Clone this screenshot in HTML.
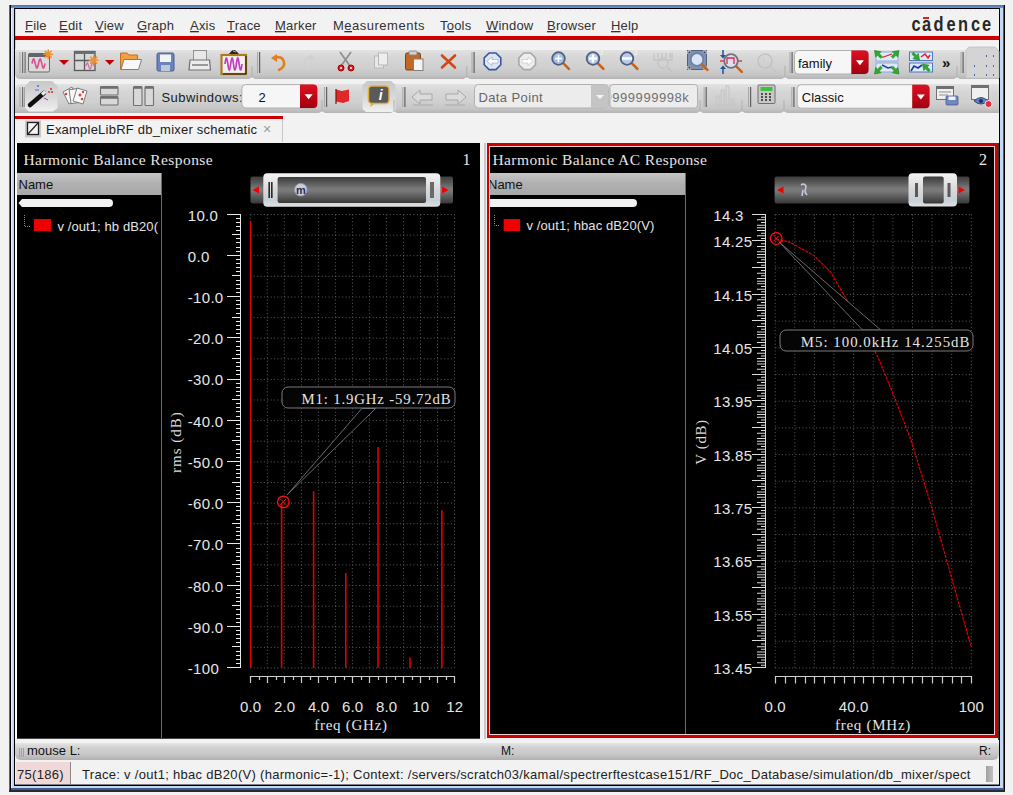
<!DOCTYPE html><html><head><meta charset="utf-8"><style>
html,body{margin:0;padding:0}
body{width:1013px;height:795px;position:relative;overflow:hidden;background:#f2f2f2;font-family:"Liberation Sans",sans-serif}
div{box-sizing:border-box}
</style></head><body>
<div style="position:absolute;left:9px;top:5px;width:1px;height:787px;background:#5a6878"></div>
<div style="position:absolute;left:10px;top:5px;width:1px;height:787px;background:#000"></div>
<div style="position:absolute;left:11px;top:5px;width:994px;height:787px;background:#c4d8f4"></div>
<div style="position:absolute;left:11px;top:5px;width:994px;height:3px;background:linear-gradient(#4a70b0,#7098d0)"></div>
<div style="position:absolute;left:1003px;top:5px;width:1px;height:787px;background:#3a5a98"></div>
<div style="position:absolute;left:1004px;top:5px;width:1px;height:787px;background:#000"></div>
<div style="position:absolute;left:11px;top:788px;width:993px;height:2px;background:#3a5a98"></div>
<div style="position:absolute;left:9px;top:790px;width:996px;height:2px;background:#2a2a2a"></div>
<div style="position:absolute;left:11px;top:8px;width:1px;height:780px;background:#e8f0ff"></div>
<div style="position:absolute;left:14px;top:8px;width:986px;height:778px;background:#000"></div>
<div style="position:absolute;left:15px;top:9px;width:984px;height:776px;background:#f2f2f2"></div>
<div style="position:absolute;left:15px;top:9px;width:1px;height:40px;background:#d0d0d0"></div>
<div style="position:absolute;left:923px;top:17px;width:6px;height:1.5px;background:#dd2020"></div>
<div style="position:absolute;left:15px;top:36px;width:984px;height:4px;background:#cc0000"></div>
<div style="position:absolute;left:15px;top:50px;width:984px;height:29px;background:linear-gradient(#e2e2e2 0%,#d6d6d6 25%,#d0d0d0 60%,#c6c6c6 85%,#b4b4b4 100%);border-radius:0 0 0 5px"></div>
<div style="position:absolute;left:15px;top:84px;width:984px;height:29px;background:linear-gradient(#e2e2e2 0%,#d6d6d6 25%,#d0d0d0 60%,#c6c6c6 85%,#b4b4b4 100%);border-radius:5px 0 0 0"></div>
<div style="position:absolute;left:15px;top:116px;width:268px;height:3px;background:#cc0000"></div>
<div style="position:absolute;left:282px;top:119px;width:1px;height:23px;background:#c8c8c8"></div>
<div style="position:absolute;left:15px;top:143px;width:2px;height:596px;background:#fff"></div>
<div style="position:absolute;left:17px;top:143px;width:463px;height:595px;background:#000"></div>
<div style="position:absolute;left:17px;top:738px;width:463px;height:1px;background:#444"></div>
<div style="position:absolute;left:484px;top:143px;width:2px;height:596px;background:#c8c8c8"></div>
<div style="position:absolute;left:487px;top:143px;width:511px;height:595px;background:#cc0000"></div>
<div style="position:absolute;left:489px;top:146px;width:506px;height:589px;background:#f0d0d0"></div>
<div style="position:absolute;left:490px;top:147px;width:504px;height:587px;background:#000"></div>
<div style="position:absolute;left:998px;top:143px;width:1px;height:597px;background:#333"></div>
<div style="position:absolute;left:15px;top:743px;width:984px;height:17px;background:linear-gradient(#e4e4e4 0%,#d0d0d0 30%,#c8c8c8 65%,#b0b0b0 100%);border-radius:0 0 6px 6px"></div>
<div style="position:absolute;left:19px;top:748px;width:1px;height:9px;background:#a0a0a0"></div>
<div style="position:absolute;left:21px;top:748px;width:1px;height:9px;background:#a0a0a0"></div>
<div style="position:absolute;left:23px;top:748px;width:1px;height:9px;background:#a0a0a0"></div>
<div style="position:absolute;left:15px;top:761px;width:984px;height:24px;background:#f2f2f2"></div>
<div style="position:absolute;left:15px;top:784px;width:984px;height:1px;background:#808080"></div>
<div style="position:absolute;left:16px;top:762px;width:54px;height:22px;background:#f0d8d8"></div>
<div style="position:absolute;left:70px;top:762px;width:1px;height:22px;background:#888"></div>
<div style="position:absolute;left:986px;top:766px;width:7px;height:16px;background:linear-gradient(90deg,#a0a0a0,#c0c0c0)"></div>
<svg style="position:absolute;left:0;top:0" width="1013" height="795" viewBox="0 0 1013 795"><path d="M20 10.5H998" stroke="#e0c8e8" stroke-width="1" stroke-dasharray="1 4"/><text x="25" y="30" font-family='"Liberation Sans", sans-serif' font-size="13" fill="#333" letter-spacing="0.2" text-anchor="start" xml:space="preserve"><tspan text-decoration="underline">F</tspan>ile</text><text x="59" y="30" font-family='"Liberation Sans", sans-serif' font-size="13" fill="#333" letter-spacing="0.2" text-anchor="start" xml:space="preserve"><tspan text-decoration="underline">E</tspan>dit</text><text x="95" y="30" font-family='"Liberation Sans", sans-serif' font-size="13" fill="#333" letter-spacing="0.2" text-anchor="start" xml:space="preserve"><tspan text-decoration="underline">V</tspan>iew</text><text x="137" y="30" font-family='"Liberation Sans", sans-serif' font-size="13" fill="#333" letter-spacing="0.2" text-anchor="start" xml:space="preserve"><tspan text-decoration="underline">G</tspan>raph</text><text x="190" y="30" font-family='"Liberation Sans", sans-serif' font-size="13" fill="#333" letter-spacing="0.2" text-anchor="start" xml:space="preserve"><tspan text-decoration="underline">A</tspan>xis</text><text x="227" y="30" font-family='"Liberation Sans", sans-serif' font-size="13" fill="#333" letter-spacing="0.2" text-anchor="start" xml:space="preserve"><tspan text-decoration="underline">T</tspan>race</text><text x="275" y="30" font-family='"Liberation Sans", sans-serif' font-size="13" fill="#333" letter-spacing="0.2" text-anchor="start" xml:space="preserve"><tspan text-decoration="underline">M</tspan>arker</text><text x="333" y="30" font-family='"Liberation Sans", sans-serif' font-size="13" fill="#333" letter-spacing="0.5" text-anchor="start" xml:space="preserve">M<tspan text-decoration="underline">e</tspan>asurements</text><text x="440" y="30" font-family='"Liberation Sans", sans-serif' font-size="13" fill="#333" letter-spacing="0.2" text-anchor="start" xml:space="preserve">T<tspan text-decoration="underline">o</tspan>ols</text><text x="486" y="30" font-family='"Liberation Sans", sans-serif' font-size="13" fill="#333" letter-spacing="0.2" text-anchor="start" xml:space="preserve"><tspan text-decoration="underline">W</tspan>indow</text><text x="547" y="30" font-family='"Liberation Sans", sans-serif' font-size="13" fill="#333" letter-spacing="0.2" text-anchor="start" xml:space="preserve"><tspan text-decoration="underline">B</tspan>rowser</text><text x="611" y="30" font-family='"Liberation Sans", sans-serif' font-size="13" fill="#333" letter-spacing="0.2" text-anchor="start" xml:space="preserve"><tspan text-decoration="underline">H</tspan>elp</text><text transform="translate(916 31.2) scale(0.78 1)" font-family='"Liberation Sans", sans-serif' font-size="21" font-weight="bold" fill="#282828" text-anchor="middle">c</text><text transform="translate(926.5 31.2) scale(0.78 1)" font-family='"Liberation Sans", sans-serif' font-size="21" font-weight="bold" fill="#282828" text-anchor="middle">a</text><text transform="translate(938.5 31.2) scale(0.78 1)" font-family='"Liberation Sans", sans-serif' font-size="21" font-weight="bold" fill="#282828" text-anchor="middle">d</text><text transform="translate(951 31.2) scale(0.78 1)" font-family='"Liberation Sans", sans-serif' font-size="21" font-weight="bold" fill="#282828" text-anchor="middle">e</text><text transform="translate(963 31.2) scale(0.78 1)" font-family='"Liberation Sans", sans-serif' font-size="21" font-weight="bold" fill="#282828" text-anchor="middle">n</text><text transform="translate(975.5 31.2) scale(0.78 1)" font-family='"Liberation Sans", sans-serif' font-size="21" font-weight="bold" fill="#282828" text-anchor="middle">c</text><text transform="translate(986.5 31.2) scale(0.78 1)" font-family='"Liberation Sans", sans-serif' font-size="21" font-weight="bold" fill="#282828" text-anchor="middle">e</text><text x="46" y="134" font-family='"Liberation Sans", sans-serif' font-size="13" fill="#1a1a1a" letter-spacing="0.22" text-anchor="start" xml:space="preserve">ExampleLibRF db_mixer schematic</text><text x="263" y="134" font-family='"Liberation Sans", sans-serif' font-size="14" fill="#999" letter-spacing="0" text-anchor="start" xml:space="preserve">×</text><text x="27" y="755" font-family='"Liberation Sans", sans-serif' font-size="13" fill="#111" letter-spacing="0" text-anchor="start" xml:space="preserve">mouse L:</text><text x="501" y="755" font-family='"Liberation Sans", sans-serif' font-size="12" fill="#111" letter-spacing="0" text-anchor="start" xml:space="preserve">M:</text><text x="979" y="755" font-family='"Liberation Sans", sans-serif' font-size="12" fill="#111" letter-spacing="0" text-anchor="start" xml:space="preserve">R:</text><text x="17" y="779" font-family='"Liberation Sans", sans-serif' font-size="13" fill="#222" letter-spacing="0.3" text-anchor="start" xml:space="preserve">75(186)</text><text x="82" y="779" font-family='"Liberation Sans", sans-serif' font-size="13" fill="#222" letter-spacing="0.3" text-anchor="start" xml:space="preserve">Trace: v /out1; hbac dB20(V) (harmonic=-1); Context: /servers/scratch03/kamal/spectrerftestcase151/RF_Doc_Database/simulation/db_mixer/spect</text><defs><linearGradient id="redbtn" x1="0" y1="0" x2="0" y2="1"><stop offset="0" stop-color="#e01020"/><stop offset="1" stop-color="#a00010"/></linearGradient>
<linearGradient id="pressed" x1="0" y1="0" x2="0" y2="1"><stop offset="0" stop-color="#c8c8c8"/><stop offset="0.6" stop-color="#dcdcdc"/><stop offset="1" stop-color="#f0f0f0"/></linearGradient></defs><rect x="19.5" y="52" width="1" height="21" fill="#a8a8a8"/><rect x="22.0" y="52" width="1.2" height="21" fill="#707070"/><rect x="24.5" y="52" width="1.2" height="21" fill="#707070"/><rect x="28.5" y="53.5" width="21" height="18.5" rx="1.5" fill="#dadada" stroke="#6a6a6a" stroke-width="1"/><rect x="28.5" y="53.5" width="21" height="3.5" fill="#5e6670"/><path d="M32.0 63.5 L32.3 62.1 L32.6 60.9 L33.0 59.9 L33.3 59.2 L33.6 59.0 L34.0 59.2 L34.3 59.9 L34.6 60.9 L34.9 62.1 L35.2 63.5 L35.6 64.9 L35.9 66.1 L36.2 67.1 L36.5 67.8 L36.9 68.0 L37.2 67.8 L37.5 67.1 L37.9 66.1 L38.2 64.9 L38.5 63.5 L38.8 62.1 L39.1 60.9 L39.5 59.9 L39.8 59.2 L40.1 59.0 L40.5 59.2 L40.8 59.9 L41.1 60.9 L41.4 62.1 L41.8 63.5 L42.1 64.9 L42.4 66.1 L42.7 67.1 L43.0 67.8 L43.4 68.0 L43.7 67.8 L44.0 67.1 L44.4 66.1 L44.7 64.9 L45.0 63.5" stroke="#d85090" stroke-width="1.6" fill="none"/><path d="M44.0 54.2L52.4 54.2M45.2 51.2L51.2 57.2M48.2 50.0L48.2 58.4M51.2 51.2L45.2 57.2" stroke="#f09030" stroke-width="1.6" stroke-linecap="round"/><path d="M59 60H69L64.0 65Z" fill="#c00000"/><rect x="74.5" y="51.5" width="20.5" height="19" fill="#d8d8d8" stroke="#5a5a5a" stroke-width="1.3"/><path d="M84.5 51.5V70.5M74.5 60.5H95" stroke="#5a5a5a" stroke-width="1.3"/><rect x="74.5" y="51.5" width="20.5" height="2.5" fill="#6a7078"/><path d="M86.0 66.0 L86.2 65.3 L86.4 64.6 L86.6 64.1 L86.8 63.6 L87.0 63.2 L87.2 63.0 L87.4 63.0 L87.6 63.1 L87.8 63.4 L88.0 63.9 L88.2 64.4 L88.4 65.1 L88.6 65.8 L88.8 66.5 L89.0 67.1 L89.2 67.8 L89.4 68.3 L89.6 68.7 L89.8 68.9 L90.0 69.0 L90.2 68.9 L90.4 68.7 L90.6 68.3 L90.8 67.8 L91.0 67.1 L91.2 66.5 L91.4 65.8 L91.6 65.1 L91.8 64.4 L92.0 63.9 L92.2 63.4 L92.4 63.1 L92.6 63.0 L92.8 63.0 L93.0 63.2 L93.2 63.6 L93.4 64.1 L93.6 64.6 L93.8 65.3 L94.0 66.0" stroke="#d070a0" stroke-width="1.3" fill="none"/><path d="M89.5 60.2L97.9 60.2M90.7 57.2L96.7 63.2M93.7 56.0L93.7 64.4M96.7 57.2L90.7 63.2" stroke="#f09030" stroke-width="1.6" stroke-linecap="round"/><path d="M105 60H114.5L109.75 65Z" fill="#c00000"/><path d="M120.5 53H127L129 55H137.5V69.5H120.5Z" fill="#f0a040" stroke="#c07020" stroke-width="1"/><path d="M124 59.5H141.5L138.5 69.5H121Z" fill="#f8f8f8" stroke="#808080" stroke-width="1"/><rect x="157" y="53" width="17" height="18" rx="1.5" fill="#6a84c0" stroke="#4a5c90" stroke-width="1"/><rect x="160" y="54.5" width="11" height="7.5" fill="#f4f4f4"/><rect x="161" y="65" width="9" height="6" fill="#c0c8d8"/><rect x="193.5" y="50.5" width="13" height="10" fill="#e8e8e8" stroke="#909090" stroke-width="1"/><path d="M190 60H209.5L210.5 70H189Z" fill="#ececec" stroke="#707070" stroke-width="1.2"/><rect x="192" y="64" width="16" height="2" fill="#9a9a9a"/><path d="M228 55L232 50.5L235 50L239 54L240 55Z" fill="#202020"/><path d="M233 51L236 52" stroke="#d0d0d0" stroke-width="0.8"/><rect x="221.5" y="55" width="24.5" height="19" fill="#f4f0f0" stroke="#b07820" stroke-width="2.2"/><path d="M246 56V74H223" stroke="#201000" stroke-width="1" fill="none"/><path d="M225.0 64.0 L225.4 61.3 L225.8 59.1 L226.3 58.1 L226.7 58.3 L227.1 59.8 L227.6 62.1 L228.0 64.9 L228.4 67.5 L228.8 69.3 L229.2 70.0 L229.7 69.3 L230.1 67.5 L230.5 64.9 L230.9 62.1 L231.4 59.8 L231.8 58.3 L232.2 58.1 L232.7 59.1 L233.1 61.3 L233.5 64.0 L233.9 66.7 L234.3 68.9 L234.8 69.9 L235.2 69.7 L235.6 68.2 L236.1 65.9 L236.5 63.1 L236.9 60.5 L237.3 58.7 L237.8 58.0 L238.2 58.7 L238.6 60.5 L239.0 63.1 L239.4 65.9 L239.9 68.2 L240.3 69.7 L240.7 69.9 L241.2 68.9 L241.6 66.7 L242.0 64.0" stroke="#c040c0" stroke-width="1.7" fill="none"/><path d="M249 79Q252 76 255 79Z" fill="#f2f2f2"/><rect x="251.5" y="66" width="1" height="11" fill="#b0b0b0"/><rect x="257" y="52" width="1" height="21" fill="#a8a8a8"/><rect x="259" y="52" width="1.2" height="21" fill="#606060"/><path d="M274 58Q282 55 284 62Q285 67 279 70" stroke="#e08020" stroke-width="2.6" fill="none" stroke-linecap="round"/><path d="M271 58L277 54L277 62Z" fill="#e08020"/><path d="M313 58Q306 56 305 62Q305 67 309 70" stroke="#d0d0d0" stroke-width="2.4" fill="none" stroke-linecap="round"/><path d="M315 58L310 54L310 62Z" fill="#d0d0d0"/><path d="M340 52L350 66M351 52L341 66" stroke="#909090" stroke-width="1.8"/><circle cx="341" cy="68" r="3" fill="#e02020" stroke="#a00000" stroke-width="1"/><circle cx="351" cy="68" r="3" fill="#e02020" stroke="#a00000" stroke-width="1"/><circle cx="341" cy="68" r="1" fill="#fff"/><circle cx="351" cy="68" r="1" fill="#fff"/><rect x="374.5" y="56" width="9" height="12" fill="#e8e8e8" stroke="#b8b8b8"/><rect x="378.5" y="53" width="9" height="12" fill="#eeeeee" stroke="#b8b8b8"/><rect x="405.5" y="53" width="15" height="17" rx="1.5" fill="#c06828" stroke="#804010" stroke-width="1"/><rect x="409" y="51" width="8" height="4" rx="1" fill="#d0d0d0" stroke="#808080" stroke-width="0.8"/><rect x="413.5" y="59" width="9.5" height="11.5" fill="#f4f4f4" stroke="#808080" stroke-width="1"/><path d="M442 55.5L455 67.5M455 55.5L442 67.5" stroke="#d04818" stroke-width="2.6" stroke-linecap="round"/><path d="M463.7 79Q466.7 76 469.7 79Z" fill="#f2f2f2"/><rect x="466.2" y="66" width="1" height="11" fill="#b0b0b0"/><rect x="471.5" y="52" width="1" height="21" fill="#a8a8a8"/><rect x="473.5" y="52" width="1.2" height="21" fill="#606060"/><path d="M500.8 64.7 L495.9 69.6 L489.1 69.6 L484.2 64.7 L484.2 57.9 L489.1 53.0 L495.9 53.0 L500.8 57.9Z" fill="#dde4f4" stroke="#3a58a0" stroke-width="1.6"/><path d="M487 61.3L492 57V59.5H498V63H492V65.5Z" fill="#fff" stroke="#90a0c0" stroke-width="0.6"/><path d="M535.5 64.7 L530.6 69.6 L523.8 69.6 L518.9 64.7 L518.9 57.9 L523.8 53.0 L530.6 53.0 L535.5 57.9Z" fill="#eeeeee" stroke="#a8a8a8" stroke-width="1.6"/><path d="M533 61.3L528 57V59.5H522V63H528V65.5Z" fill="#fff" stroke="#c0c0c0" stroke-width="0.6"/><path d="M562.9 62.9L568.9 68.9" stroke="#d06010" stroke-width="2.6" stroke-linecap="round"/><circle cx="558.5" cy="58.5" r="6.3" fill="#a8c0e8" stroke="#506080" stroke-width="1.8"/><path d="M555 58.5H562M558.5 55V62" stroke="#fff" stroke-width="1.5"/><path d="M597.4 62.9L603.4 68.9" stroke="#d06010" stroke-width="2.6" stroke-linecap="round"/><circle cx="593" cy="58.5" r="6.3" fill="#b8cce8" stroke="#506080" stroke-width="1.8"/><path d="M589 58.5H597M593 54.5V62.5" stroke="#fff" stroke-width="2.4"/><text x="600.0" y="55.0" font-family='"Liberation Sans", sans-serif' font-size="6" fill="#f8f8f8" letter-spacing="0" text-anchor="start" >2</text><path d="M631.4 62.9L637.4 68.9" stroke="#d06010" stroke-width="2.6" stroke-linecap="round"/><circle cx="627" cy="58.5" r="6.3" fill="#b8cce8" stroke="#506080" stroke-width="1.8"/><path d="M622 58.5H632" stroke="#fff" stroke-width="2.4"/><text x="634.0" y="55.0" font-family='"Liberation Sans", sans-serif' font-size="6" fill="#f8f8f8" letter-spacing="0" text-anchor="start" >2</text><path d="M654 53V60H672V53M658 53V58M662 53V58M666 53V58M670 53V58" stroke="#c4c4c4" stroke-width="1.4" fill="none"/><circle cx="663" cy="63" r="5" fill="none" stroke="#c4c4c4" stroke-width="1.4"/><path d="M667 67L673 73" stroke="#c4c4c4" stroke-width="1.8"/><rect x="687.5" y="50.5" width="19" height="19" fill="#8090b0" stroke="#506080" stroke-width="1"/><path d="M688 54V51H691M703 51H706V54M706 66V69H703M691 69H688V66" stroke="#f0f0f0" stroke-width="1"/><path d="M701.4 63.9L707.4 69.9" stroke="#d06010" stroke-width="2.6" stroke-linecap="round"/><circle cx="697" cy="59.5" r="6.3" fill="#d8e4f8" stroke="#7080a0" stroke-width="1.8"/><path d="M723 50V57M723 74V67" stroke="#2050a0" stroke-width="1.5"/><path d="M720 55L723 58.5L726 55ZM720 69L723 65.5L726 69Z" fill="#2050a0"/><path d="M720 61H724M737 61H742" stroke="#e04040" stroke-width="1.3"/><path d="M735.8 65.8L741.8 71.8" stroke="#d06010" stroke-width="2.6" stroke-linecap="round"/><circle cx="731" cy="61" r="6.8" fill="#e0e0e8" stroke="#707080" stroke-width="1.8"/><path d="M727 64V58H734V64" stroke="#e02060" stroke-width="1.3" fill="none"/><circle cx="765" cy="61" r="7" fill="none" stroke="#c0c0c0" stroke-width="1.3"/><path d="M760 58L770 64M764 54V68" stroke="#d0d0d0" stroke-width="1"/><path d="M770 66L777 73" stroke="#c8c8c8" stroke-width="1.8"/><path d="M782 79Q785 76 788 79Z" fill="#f2f2f2"/><rect x="784.5" y="66" width="1" height="11" fill="#b0b0b0"/><rect x="789.5" y="52" width="1" height="21" fill="#a8a8a8"/><rect x="791.5" y="52" width="1.2" height="21" fill="#606060"/><rect x="794.5" y="50.5" width="74.0" height="23.5" rx="4" fill="#f6f6f6" stroke="#b0b0b0" stroke-width="1"/><path d="M851.3 50.5H864.5Q868.5 50.5 868.5 54.5V70Q868.5 74 864.5 74H851.3Z" fill="url(#redbtn)"/><path d="M855.9 60.25H863.9L859.9 65.25Z" fill="#fff"/><text x="798.0" y="68.0" font-family='"Liberation Sans", sans-serif' font-size="13" fill="#111" letter-spacing="0" text-anchor="start" >family</text><rect x="876" y="52" width="22" height="9" fill="#dfe8f8" stroke="#90a8d8" stroke-width="1"/><rect x="876" y="63" width="22" height="9" fill="#dfe8f8" stroke="#90a8d8" stroke-width="1"/><path d="M882 57.5L892 54" stroke="#e02020" stroke-width="1.3"/><path d="M882 65L888 68L892 67" stroke="#2040a0" stroke-width="1.5" fill="none"/><path d="M874.5 50.5L881.1 51.7L875.7 57.1Z" fill="#30a830" stroke="#208020" stroke-width="0.6"/><path d="M878.4 54.4L881.6 57.6" stroke="#30a830" stroke-width="3"/><path d="M899.0 50.5L897.8 57.1L892.4 51.7Z" fill="#30a830" stroke="#208020" stroke-width="0.6"/><path d="M895.1 54.4L891.9 57.6" stroke="#30a830" stroke-width="3"/><path d="M874.5 74.0L875.7 67.4L881.1 72.8Z" fill="#30a830" stroke="#208020" stroke-width="0.6"/><path d="M878.4 70.1L881.6 66.9" stroke="#30a830" stroke-width="3"/><path d="M899.0 74.0L892.4 72.8L897.8 67.4Z" fill="#30a830" stroke="#208020" stroke-width="0.6"/><path d="M895.1 70.1L891.9 66.9" stroke="#30a830" stroke-width="3"/><rect x="909.5" y="52" width="23" height="8.5" fill="#dfe8f8" stroke="#5078c0" stroke-width="1"/><rect x="909.5" y="63" width="23" height="9" fill="#dfe8f8" stroke="#5078c0" stroke-width="1"/><path d="M921 57L925 54L928 58L930 55" stroke="#e02020" stroke-width="1.5" fill="none"/><path d="M911 71L914 66L918 68L922 65" stroke="#1838a0" stroke-width="1.6" fill="none"/><path d="M919.5 60.0L912.9 58.8L918.3 53.4Z" fill="#30a830" stroke="#208020" stroke-width="0.6"/><path d="M915.6 56.1L912.4 52.9" stroke="#30a830" stroke-width="3"/><path d="M922.5 64.0L929.1 65.2L923.7 70.6Z" fill="#30a830" stroke="#208020" stroke-width="0.6"/><path d="M926.4 67.9L929.6 71.1" stroke="#30a830" stroke-width="3"/><text x="942.0" y="68.0" font-family='"Liberation Sans", sans-serif' font-size="15" fill="#111" letter-spacing="0" text-anchor="start" font-weight="bold">»</text><path d="M954 79Q957 76 960 79Z" fill="#f2f2f2"/><rect x="956.5" y="66" width="1" height="11" fill="#b0b0b0"/><rect x="960.5" y="52" width="1" height="21" fill="#a8a8a8"/><rect x="962.5" y="52" width="1.2" height="21" fill="#606060"/><path d="M969 47H995L999 51V78H966V50Z" fill="#d4d4d4" stroke="#c0c0c0" stroke-width="0.8"/><path d="M986 56h1M993 56h1M974 66h1M986 66h1M993 66h1M974 75h1M986 75h1M993 75h1" stroke="#2040a0" stroke-width="1.5"/><rect x="19.5" y="87" width="1" height="20" fill="#a8a8a8"/><rect x="22.0" y="87" width="1.2" height="20" fill="#707070"/><rect x="24.5" y="87" width="1.2" height="20" fill="#707070"/><path d="M30 81H52L57.5 86V108L53 111.5H29L25 108V86Z" fill="url(#pressed)"/><path d="M30 105L44 93" stroke="#101010" stroke-width="4.5" stroke-linecap="round"/><path d="M42 94.5L45.5 91.5" stroke="#e8e8e8" stroke-width="3.5"/><circle cx="38" cy="86" r="0.9" fill="#4060e0"/><path d="M35 90H39" stroke="#4060e0" stroke-width="0.9"/><circle cx="51" cy="89" r="1" fill="#e02020"/><circle cx="49" cy="92" r="1" fill="#e04020"/><circle cx="52" cy="92" r="1" fill="#e02020"/><path d="M44 98L48 100" stroke="#a040c0" stroke-width="1"/><path d="M63 92L72 87L78 100L69 104Z" fill="#f8f8f8" stroke="#707070" stroke-width="0.9"/><path d="M70 89H80V103H70Z" fill="#f8f8f8" stroke="#707070" stroke-width="0.9" transform="rotate(-8 75 96)"/><path d="M77 88L87 91L83 104L73 101Z" fill="#f8f8f8" stroke="#707070" stroke-width="0.9"/><circle cx="66" cy="94" r="1.3" fill="#e04040"/><circle cx="80" cy="95" r="1.5" fill="#e04040"/><circle cx="82" cy="99" r="1.3" fill="#e04040"/><circle cx="83" cy="92" r="1.2" fill="#e04040"/><rect x="100.5" y="86.5" width="17.5" height="8.5" rx="1" fill="#d8d8d8" stroke="#707070" stroke-width="1.1"/><rect x="100.5" y="86.5" width="17.5" height="2.3" fill="#707070"/><rect x="100.5" y="96.5" width="17.5" height="8.5" rx="1" fill="#d8d8d8" stroke="#707070" stroke-width="1.1"/><rect x="100.5" y="96.5" width="17.5" height="2.3" fill="#707070"/><rect x="133.5" y="86.5" width="8.5" height="19" rx="1" fill="#d8d8d8" stroke="#707070" stroke-width="1.1"/><rect x="133.5" y="86.5" width="8.5" height="2.3" fill="#707070"/><rect x="145" y="86.5" width="8.5" height="19" rx="1" fill="#d8d8d8" stroke="#707070" stroke-width="1.1"/><rect x="145" y="86.5" width="8.5" height="2.3" fill="#707070"/><text x="161.5" y="102.0" font-family='"Liberation Sans", sans-serif' font-size="13" fill="#1a1a1a" letter-spacing="0.45" text-anchor="start" >Subwindows:</text><rect x="241.8" y="84.6" width="75.5" height="23.400000000000006" rx="4" fill="#f6f6f6" stroke="#b0b0b0" stroke-width="1"/><path d="M300 84.6H313.3Q317.3 84.6 317.3 88.6V104Q317.3 108 313.3 108H300Z" fill="url(#redbtn)"/><path d="M304.65 94.3H312.65L308.65 99.3Z" fill="#fff"/><text x="258.5" y="102.0" font-family='"Liberation Sans", sans-serif' font-size="13" fill="#111" letter-spacing="0" text-anchor="start" >2</text><path d="M319 113Q322 110 325 113Z" fill="#f2f2f2"/><rect x="321.5" y="100" width="1" height="11" fill="#b0b0b0"/><rect x="324" y="87" width="1" height="20" fill="#a8a8a8"/><rect x="326" y="87" width="1.2" height="20" fill="#606060"/><path d="M336 89.5L342 91L349 89.5V101L343 103L336 101.5Z" fill="#e02828"/><path d="M336 89V104" stroke="#801010" stroke-width="1.2"/><path d="M367 81H391L395.5 85V110L392 112H366L362.5 109V85Z" fill="url(#pressed)"/><rect x="368.5" y="86" width="20.5" height="17.5" rx="3.5" fill="#5a5a5a" stroke="#e0b040" stroke-width="1.5"/><path d="M371 103L370 107L375 103.5" fill="#e0b040"/><text x="378.8" y="100.0" font-family='"Liberation Sans", sans-serif' font-size="14" fill="#fff" letter-spacing="0" text-anchor="start" font-weight="bold" font-style="italic">i</text><path d="M391 113Q394 110 397 113Z" fill="#f2f2f2"/><rect x="393.5" y="100" width="1" height="11" fill="#b0b0b0"/><rect x="402.3" y="87" width="1" height="20" fill="#a8a8a8"/><rect x="404.3" y="87" width="1.2" height="20" fill="#606060"/><path d="M412 97L420 90V94H432V100H420V104Z" fill="#dcdcdc" stroke="#a8a8a8" stroke-width="1"/><path d="M413 105H433" stroke="#b0b0b0" stroke-width="1.2"/><path d="M466 97L458 90V94H446V100H458V104Z" fill="#dcdcdc" stroke="#a8a8a8" stroke-width="1"/><path d="M445 105H465" stroke="#b0b0b0" stroke-width="1.2"/><rect x="474.5" y="84.5" width="134" height="23.5" rx="4" fill="#ececec" stroke="#b0b0b0" stroke-width="1"/><path d="M591 84.5H604.5Q608.5 84.5 608.5 88.5V104Q608.5 108 604.5 108H591Z" fill="#c4c4c4"/><path d="M596 95H604L600 99Z" fill="#f4f4f4"/><text x="478.4" y="102.0" font-family='"Liberation Sans", sans-serif' font-size="13" fill="#666" letter-spacing="0.4" text-anchor="start" >Data Point</text><rect x="610" y="84.5" width="87.5" height="23.5" rx="3" fill="#ececec" stroke="#b0b0b0" stroke-width="1"/><svg x="611" y="84" width="86" height="24" overflow="hidden"><text x="-6.5" y="18.0" font-family='"Liberation Sans", sans-serif' font-size="13" fill="#707070" letter-spacing="0.55" text-anchor="start" >9999999998k</text></svg><path d="M697 113Q700 110 703 113Z" fill="#f2f2f2"/><rect x="699.5" y="100" width="1" height="11" fill="#b0b0b0"/><rect x="703.6" y="87" width="1" height="20" fill="#a8a8a8"/><rect x="705.6" y="87" width="1.2" height="20" fill="#606060"/><path d="M714 105H736M716 105V96H719V105M721 105V90H724V105M726 105V86H729V105M731 105V99H734V105" stroke="#c4c4c4" stroke-width="1" fill="none"/><path d="M739 113Q742 110 745 113Z" fill="#f2f2f2"/><rect x="741.5" y="100" width="1" height="11" fill="#b0b0b0"/><rect x="748" y="87" width="1" height="20" fill="#a8a8a8"/><rect x="750" y="87" width="1.2" height="20" fill="#606060"/><rect x="758" y="85" width="17" height="18.5" rx="1" fill="#c8c8c8" stroke="#707070" stroke-width="1"/><rect x="760.5" y="87" width="12" height="4" fill="#40c040"/><path d="M761 94h2M765 94h2M769 94h2M761 97h2M765 97h2M769 97h2M761 100h2M765 100h2M769 100h2" stroke="#505050" stroke-width="1.8"/><path d="M781 113Q784 110 787 113Z" fill="#f2f2f2"/><rect x="783.5" y="100" width="1" height="11" fill="#b0b0b0"/><rect x="791.3" y="87" width="1" height="20" fill="#a8a8a8"/><rect x="793.3" y="87" width="1.2" height="20" fill="#606060"/><rect x="797.2" y="84.7" width="132.29999999999995" height="23.5" rx="4" fill="#f6f6f6" stroke="#b0b0b0" stroke-width="1"/><path d="M912.2 84.7H925.5Q929.5 84.7 929.5 88.7V104.2Q929.5 108.2 925.5 108.2H912.2Z" fill="url(#redbtn)"/><path d="M916.85 94.45H924.85L920.85 99.45Z" fill="#fff"/><text x="801.8" y="102.0" font-family='"Liberation Sans", sans-serif' font-size="13" fill="#111" letter-spacing="0" text-anchor="start" >Classic</text><rect x="936.5" y="86.5" width="17" height="13" fill="#f0f0f0" stroke="#707070" stroke-width="1"/><rect x="936.5" y="86.5" width="17" height="2.5" fill="#707070"/><path d="M939 92H951M939 95H948" stroke="#909090" stroke-width="1"/><rect x="946" y="96" width="12" height="9" rx="1" fill="#7088c0" stroke="#4a5c90" stroke-width="0.8"/><rect x="948.5" y="96.5" width="7" height="3.5" fill="#f0f0f0"/><rect x="971.5" y="85.5" width="17" height="14" fill="#f0f0f0" stroke="#707070" stroke-width="1"/><rect x="971.5" y="85.5" width="17" height="2.5" fill="#707070"/><path d="M974 101Q981 94 988 101Q981 107 974 101Z" fill="#6080c0" stroke="#304880" stroke-width="1"/><circle cx="981" cy="101" r="2" fill="#203060"/><circle cx="988.5" cy="104" r="3.5" fill="#e03040" stroke="#fff" stroke-width="0.8"/><rect x="25" y="120.5" width="16" height="17" fill="#c8c8c8"/><rect x="27.5" y="122.5" width="11" height="12" fill="#f4f4f4" stroke="#202020" stroke-width="1.3"/><path d="M28 134L38 123" stroke="#202020" stroke-width="1.2"/><defs>
<linearGradient id="chan" x1="0" y1="0" x2="0" y2="1">
<stop offset="0" stop-color="#3c3c3c"/><stop offset="0.2" stop-color="#555"/><stop offset="0.45" stop-color="#7a7a7a"/><stop offset="0.55" stop-color="#787878"/><stop offset="0.8" stop-color="#555"/><stop offset="1" stop-color="#383838"/></linearGradient>
<linearGradient id="silver" x1="0" y1="0" x2="0" y2="1">
<stop offset="0" stop-color="#f4f4f4"/><stop offset="0.5" stop-color="#d8d8d8"/><stop offset="0.8" stop-color="#c8d0d8"/><stop offset="1" stop-color="#e0e0e0"/></linearGradient>
<linearGradient id="namebar" x1="0" y1="0" x2="0" y2="1">
<stop offset="0" stop-color="#c4c4c4"/><stop offset="0.5" stop-color="#b0b0b0"/><stop offset="1" stop-color="#a8a8a8"/></linearGradient>
</defs><text x="23.5" y="165.0" font-family='"Liberation Serif", serif' font-size="15.5" fill="#e4e4e4" letter-spacing="0.42" text-anchor="start" >Harmonic Balance Response</text><text x="462.5" y="165.0" font-family='"Liberation Serif", serif' font-size="16" fill="#e4e4e4" letter-spacing="0" text-anchor="start" >1</text><rect x="17" y="173" width="144" height="22" fill="url(#namebar)"/><text x="18.5" y="188.6" font-family='"Liberation Sans", sans-serif' font-size="13" fill="#111" letter-spacing="0" text-anchor="start" >Name</text><rect x="161" y="173" width="1" height="565" fill="#6a6a6a"/><path d="M22 199H109Q113 199 113 203Q113 207 109 207H22L18.5 203Z" fill="#f2f2f2"/><path d="M24.5 215V226.5H31" stroke="#888" stroke-width="1" stroke-dasharray="1 1" fill="none"/><rect x="34" y="219" width="17" height="12" fill="#ee0000"/><svg x="0" y="210" width="158" height="30" overflow="hidden"><text x="57.4" y="20.8" font-family='"Liberation Sans", sans-serif' font-size="13" fill="#e4e4e4" letter-spacing="0.1" text-anchor="start" >v /out1; hb dB20(V)</text></svg><rect x="250.5" y="176.5" width="14" height="27" rx="2" fill="url(#chan)"/><rect x="439" y="176.5" width="14" height="27" rx="2" fill="url(#chan)"/><rect x="263.3" y="173.3" width="177" height="33.4" rx="4" fill="url(#silver)"/><rect x="277.6" y="177" width="148.4" height="26" rx="2" fill="url(#chan)"/><path d="M252.5 190L259 186.5V193.5Z" fill="#f00000"/><path d="M448.5 190L442 186.5V193.5Z" fill="#f00000"/><rect x="268.5" y="182" width="1.3" height="16" fill="#000"/><rect x="271.2" y="182" width="1.3" height="16" fill="#000"/><rect x="430" y="182" width="4" height="16" fill="#6a6a6a"/><circle cx="300.8" cy="189.7" r="6.3" fill="#c8cce0" stroke="#9098b8" stroke-width="1"/><text x="300.8" y="193.5" font-family='"Liberation Sans", sans-serif' font-size="11" font-weight="bold" fill="#303040" text-anchor="middle">m</text><text x="492.5" y="164.5" font-family='"Liberation Serif", serif' font-size="15.5" fill="#e4e4e4" letter-spacing="0.4" text-anchor="start" >Harmonic Balance AC Response</text><text x="979.0" y="164.7" font-family='"Liberation Serif", serif' font-size="16" fill="#ececec" letter-spacing="0" text-anchor="start" >2</text><rect x="490" y="173" width="196" height="22" fill="url(#namebar)"/><svg x="490" y="173" width="196" height="22" overflow="hidden"><text x="-2.0" y="15.6" font-family='"Liberation Sans", sans-serif' font-size="13" fill="#111" letter-spacing="0" text-anchor="start" >Name</text></svg><rect x="685" y="173" width="1" height="561" fill="#6a6a6a"/><path d="M490 199H633Q637 199 637 203Q637 207 633 207H490Z" fill="#f2f2f2"/><path d="M494.5 215V225.5H500" stroke="#888" stroke-width="1" stroke-dasharray="1 1" fill="none"/><rect x="503.6" y="219" width="16.5" height="12" fill="#ee0000"/><text x="526.5" y="230.3" font-family='"Liberation Sans", sans-serif' font-size="13" fill="#e4e4e4" letter-spacing="0.1" text-anchor="start" >v /out1; hbac dB20(V)</text><rect x="774.6" y="176.4" width="194.8" height="27" rx="2" fill="url(#chan)"/><rect x="908.5" y="173.3" width="48.5" height="33.2" rx="4" fill="url(#silver)"/><rect x="923" y="176.4" width="20.7" height="27" rx="2" fill="url(#chan)"/><rect x="915" y="183" width="3" height="14" fill="#5a5a5a"/><rect x="947.5" y="183" width="3" height="14" fill="#5a5a5a"/><path d="M777 190L783.5 186.5V193.5Z" fill="#f00000"/><path d="M965 190L958.5 186.5V193.5Z" fill="#f00000"/><path d="M801 185Q804 183 806 186L805 192L807 195M803 190L802 196" stroke="#c0c8e0" stroke-width="1.6" fill="none"/><path d="M250.3 214.5H454.5 M250.3 235.1H454.5 M250.3 255.7H454.5 M250.3 276.3H454.5 M250.3 297.0H454.5 M250.3 317.6H454.5 M250.3 338.2H454.5 M250.3 358.8H454.5 M250.3 379.4H454.5 M250.3 400.0H454.5 M250.3 420.6H454.5 M250.3 441.2H454.5 M250.3 461.9H454.5 M250.3 482.5H454.5 M250.3 503.1H454.5 M250.3 523.7H454.5 M250.3 544.3H454.5 M250.3 564.9H454.5 M250.3 585.5H454.5 M250.3 606.2H454.5 M250.3 626.8H454.5 M250.3 647.4H454.5 M250.3 668.0H454.5 M250.3 214.5V668.0 M267.3 214.5V668.0 M284.3 214.5V668.0 M301.4 214.5V668.0 M318.4 214.5V668.0 M335.4 214.5V668.0 M352.4 214.5V668.0 M369.4 214.5V668.0 M386.4 214.5V668.0 M403.5 214.5V668.0 M420.5 214.5V668.0 M437.5 214.5V668.0 M454.5 214.5V668.0" stroke="#5c5c5c" stroke-width="1" stroke-dasharray="1 2.4" fill="none"/><path d="M240.5 214.5V668.0 M227 214.5H241 M236 218.5H241 M236 222.5H241 M236 226.5H241 M236 230.5H241 M232 234.5H241 M236 238.5H241 M236 242.5H241 M236 247.5H241 M236 251.5H241 M227 255.5H241 M236 259.5H241 M236 263.5H241 M236 267.5H241 M236 271.5H241 M232 275.5H241 M236 280.5H241 M236 284.5H241 M236 288.5H241 M236 292.5H241 M227 296.5H241 M236 300.5H241 M236 304.5H241 M236 308.5H241 M236 313.5H241 M232 317.5H241 M236 321.5H241 M236 325.5H241 M236 329.5H241 M236 333.5H241 M227 337.5H241 M236 341.5H241 M236 346.5H241 M236 350.5H241 M236 354.5H241 M232 358.5H241 M236 362.5H241 M236 366.5H241 M236 370.5H241 M236 374.5H241 M227 379.5H241 M236 383.5H241 M236 387.5H241 M236 391.5H241 M236 395.5H241 M232 399.5H241 M236 403.5H241 M236 407.5H241 M236 411.5H241 M236 416.5H241 M227 420.5H241 M236 424.5H241 M236 428.5H241 M236 432.5H241 M236 436.5H241 M232 440.5H241 M236 444.5H241 M236 449.5H241 M236 453.5H241 M236 457.5H241 M227 461.5H241 M236 465.5H241 M236 469.5H241 M236 473.5H241 M236 477.5H241 M232 482.5H241 M236 486.5H241 M236 490.5H241 M236 494.5H241 M236 498.5H241 M227 502.5H241 M236 506.5H241 M236 510.5H241 M236 515.5H241 M236 519.5H241 M232 523.5H241 M236 527.5H241 M236 531.5H241 M236 535.5H241 M236 539.5H241 M227 543.5H241 M236 548.5H241 M236 552.5H241 M236 556.5H241 M236 560.5H241 M232 564.5H241 M236 568.5H241 M236 572.5H241 M236 576.5H241 M236 581.5H241 M227 585.5H241 M236 589.5H241 M236 593.5H241 M236 597.5H241 M236 601.5H241 M232 605.5H241 M236 609.5H241 M236 614.5H241 M236 618.5H241 M236 622.5H241 M227 626.5H241 M236 630.5H241 M236 634.5H241 M236 638.5H241 M236 642.5H241 M232 646.5H241 M236 651.5H241 M236 655.5H241 M236 659.5H241 M236 663.5H241 M227 667.5H241" stroke="#e8e8e8" stroke-width="1" fill="none"/><text x="187.8" y="220.5" font-family='"Liberation Sans", sans-serif' font-size="15" fill="#e6e6e6" letter-spacing="0.3" text-anchor="start" >10.0</text><text x="187.8" y="261.7" font-family='"Liberation Sans", sans-serif' font-size="15" fill="#e6e6e6" letter-spacing="0.3" text-anchor="start" >0.0</text><text x="187.8" y="303.0" font-family='"Liberation Sans", sans-serif' font-size="15" fill="#e6e6e6" letter-spacing="0.3" text-anchor="start" >-10.0</text><text x="187.8" y="344.2" font-family='"Liberation Sans", sans-serif' font-size="15" fill="#e6e6e6" letter-spacing="0.3" text-anchor="start" >-20.0</text><text x="187.8" y="385.4" font-family='"Liberation Sans", sans-serif' font-size="15" fill="#e6e6e6" letter-spacing="0.3" text-anchor="start" >-30.0</text><text x="187.8" y="426.6" font-family='"Liberation Sans", sans-serif' font-size="15" fill="#e6e6e6" letter-spacing="0.3" text-anchor="start" >-40.0</text><text x="187.8" y="467.9" font-family='"Liberation Sans", sans-serif' font-size="15" fill="#e6e6e6" letter-spacing="0.3" text-anchor="start" >-50.0</text><text x="187.8" y="509.1" font-family='"Liberation Sans", sans-serif' font-size="15" fill="#e6e6e6" letter-spacing="0.3" text-anchor="start" >-60.0</text><text x="187.8" y="550.3" font-family='"Liberation Sans", sans-serif' font-size="15" fill="#e6e6e6" letter-spacing="0.3" text-anchor="start" >-70.0</text><text x="187.8" y="591.5" font-family='"Liberation Sans", sans-serif' font-size="15" fill="#e6e6e6" letter-spacing="0.3" text-anchor="start" >-80.0</text><text x="187.8" y="632.8" font-family='"Liberation Sans", sans-serif' font-size="15" fill="#e6e6e6" letter-spacing="0.3" text-anchor="start" >-90.0</text><text x="187.8" y="674.0" font-family='"Liberation Sans", sans-serif' font-size="15" fill="#e6e6e6" letter-spacing="0.3" text-anchor="start" >-100</text><path d="M250.3 676.5H454.5 M250.5 676V683 M259.5 676V680 M267.5 676V683 M276.5 676V680 M284.5 676V683 M293.5 676V680 M301.5 676V683 M310.5 676V680 M318.5 676V683 M327.5 676V680 M335.5 676V683 M344.5 676V680 M352.5 676V683 M361.5 676V680 M369.5 676V683 M378.5 676V680 M386.5 676V683 M395.5 676V680 M403.5 676V683 M412.5 676V680 M420.5 676V683 M429.5 676V680 M437.5 676V683 M446.5 676V680 M454.5 676V683" stroke="#cfcfcf" stroke-width="1.2" fill="none"/><text x="250.6" y="712.0" font-family='"Liberation Sans", sans-serif' font-size="15" fill="#e6e6e6" letter-spacing="0.1" text-anchor="middle" >0.0</text><text x="284.6" y="712.0" font-family='"Liberation Sans", sans-serif' font-size="15" fill="#e6e6e6" letter-spacing="0.1" text-anchor="middle" >2.0</text><text x="318.6" y="712.0" font-family='"Liberation Sans", sans-serif' font-size="15" fill="#e6e6e6" letter-spacing="0.1" text-anchor="middle" >4.0</text><text x="352.6" y="712.0" font-family='"Liberation Sans", sans-serif' font-size="15" fill="#e6e6e6" letter-spacing="0.1" text-anchor="middle" >6.0</text><text x="386.7" y="712.0" font-family='"Liberation Sans", sans-serif' font-size="15" fill="#e6e6e6" letter-spacing="0.1" text-anchor="middle" >8.0</text><text x="420.7" y="712.0" font-family='"Liberation Sans", sans-serif' font-size="15" fill="#e6e6e6" letter-spacing="0.1" text-anchor="middle" >10</text><text x="454.8" y="712.0" font-family='"Liberation Sans", sans-serif' font-size="15" fill="#e6e6e6" letter-spacing="0.1" text-anchor="middle" >12</text><text x="351.0" y="730.3" font-family='"Liberation Serif", serif' font-size="15" fill="#e4e4e4" letter-spacing="0.75" text-anchor="middle" >freq (GHz)</text><text x="0.0" y="0.0" font-family='"Liberation Serif", serif' font-size="15" fill="#dcdcdc" letter-spacing="1.0" text-anchor="middle" transform="translate(181 442) rotate(-90)">rms (dB)</text><rect x="249.9" y="221.7" width="1.6" height="446.3" fill="#e00000"/><rect x="280.8" y="504.0" width="1.6" height="164.0" fill="#e00000"/><rect x="312.8" y="491.3" width="1.6" height="176.7" fill="#e00000"/><rect x="345.0" y="573.0" width="1.6" height="95.0" fill="#e00000"/><rect x="377.2" y="447.0" width="1.6" height="221.0" fill="#e00000"/><rect x="409.2" y="657.4" width="1.6" height="10.6" fill="#e00000"/><rect x="441.1" y="510.2" width="1.6" height="157.8" fill="#e00000"/><path d="M287 495L361.8 408.5L375.6 408.5Z" stroke="#6a6a6a" stroke-width="1" fill="#000"/><rect x="282" y="387" width="173" height="21" rx="6" fill="#050505" stroke="#7a7a7a" stroke-width="1"/><text x="301.4" y="403.7" font-family='"Liberation Serif", serif' font-size="14.8" fill="#e4e4e4" letter-spacing="0.85" text-anchor="start" >M1: 1.9GHz -59.72dB</text><circle cx="283.3" cy="501.9" r="5.8" fill="none" stroke="#ff1010" stroke-width="1.3"/><path d="M280.3 498.9L286.3 504.9M286.3 498.9L280.3 504.9" stroke="#ff1010" stroke-width="1"/><path d="M775.2 214.5H971.3 M775.2 241.2H971.3 M775.2 267.9H971.3 M775.2 294.5H971.3 M775.2 321.2H971.3 M775.2 347.9H971.3 M775.2 374.6H971.3 M775.2 401.2H971.3 M775.2 427.9H971.3 M775.2 454.6H971.3 M775.2 481.3H971.3 M775.2 507.9H971.3 M775.2 534.6H971.3 M775.2 561.3H971.3 M775.2 588.0H971.3 M775.2 614.6H971.3 M775.2 641.3H971.3 M775.2 668.0H971.3 M775.2 214.5V668.0 M794.8 214.5V668.0 M814.4 214.5V668.0 M834.0 214.5V668.0 M853.6 214.5V668.0 M873.2 214.5V668.0 M892.9 214.5V668.0 M912.5 214.5V668.0 M932.1 214.5V668.0 M951.7 214.5V668.0 M971.3 214.5V668.0" stroke="#5c5c5c" stroke-width="1" stroke-dasharray="1 2.4" fill="none"/><path d="M765.5 214.5V668.0 M752 214.5H766 M761 217.25H766 M757 219.75H766 M761 222.5H766 M757 225.25H766 M757 227.75H766 M757 230.5H766 M761 233.25H766 M757 235.75H766 M761 238.5H766 M752 240.5H766 M761 243.75H766 M757 246.5H766 M761 249.25H766 M757 251.75H766 M757 254.5H766 M757 257.25H766 M761 259.75H766 M757 262.5H766 M761 265.25H766 M752 267.5H766 M761 270.5H766 M757 273.25H766 M761 275.75H766 M757 278.5H766 M757 281.25H766 M757 283.75H766 M761 286.5H766 M757 289.25H766 M761 291.75H766 M752 294.5H766 M761 297.25H766 M757 299.75H766 M761 302.5H766 M757 305.25H766 M757 307.75H766 M757 310.5H766 M761 313.25H766 M757 315.75H766 M761 318.5H766 M752 320.5H766 M761 323.75H766 M757 326.5H766 M761 329.25H766 M757 332.0H766 M757 334.5H766 M757 337.25H766 M761 340.0H766 M757 342.5H766 M761 345.25H766 M752 347.5H766 M761 350.5H766 M757 353.25H766 M761 356.0H766 M757 358.5H766 M757 361.25H766 M757 364.0H766 M761 366.5H766 M757 369.25H766 M761 372.0H766 M752 374.5H766 M761 377.25H766 M757 380.0H766 M761 382.5H766 M757 385.25H766 M757 388.0H766 M757 390.5H766 M761 393.25H766 M757 396.0H766 M761 398.5H766 M752 400.5H766 M761 404.0H766 M757 406.5H766 M761 409.25H766 M757 412.0H766 M757 414.5H766 M757 417.25H766 M761 420.0H766 M757 422.5H766 M761 425.25H766 M752 427.5H766 M761 430.5H766 M757 433.25H766 M761 436.0H766 M757 438.5H766 M757 441.25H766 M757 444.0H766 M761 446.5H766 M757 449.25H766 M761 452.0H766 M752 454.5H766 M761 457.25H766 M757 460.0H766 M761 462.5H766 M757 465.25H766 M757 468.0H766 M757 470.5H766 M761 473.25H766 M757 476.0H766 M761 478.5H766 M752 480.5H766 M761 484.0H766 M757 486.5H766 M761 489.25H766 M757 492.0H766 M757 494.5H766 M757 497.25H766 M761 500.0H766 M757 502.5H766 M761 505.25H766 M752 507.5H766 M761 510.5H766 M757 513.25H766 M761 516.0H766 M757 518.5H766 M757 521.25H766 M757 524.0H766 M761 526.5H766 M757 529.25H766 M761 532.0H766 M752 534.5H766 M761 537.25H766 M757 540.0H766 M761 542.5H766 M757 545.25H766 M757 548.0H766 M757 550.5H766 M761 553.25H766 M757 556.0H766 M761 558.75H766 M752 560.5H766 M761 564.0H766 M757 566.75H766 M761 569.25H766 M757 572.0H766 M757 574.75H766 M757 577.25H766 M761 580.0H766 M757 582.75H766 M761 585.25H766 M752 587.5H766 M761 590.75H766 M757 593.25H766 M761 596.0H766 M757 598.75H766 M757 601.25H766 M757 604.0H766 M761 606.75H766 M757 609.25H766 M761 612.0H766 M752 614.5H766 M761 617.25H766 M757 620.0H766 M761 622.75H766 M757 625.25H766 M757 628.0H766 M757 630.75H766 M761 633.25H766 M757 636.0H766 M761 638.75H766 M752 640.5H766 M761 644.0H766 M757 646.75H766 M761 649.25H766 M757 652.0H766 M757 654.75H766 M757 657.25H766 M761 660.0H766 M757 662.75H766 M761 665.25H766 M752 667.5H766" stroke="#dcdcdc" stroke-width="1" fill="none"/><text x="713.3" y="220.5" font-family='"Liberation Sans", sans-serif' font-size="15" fill="#e6e6e6" letter-spacing="0.3" text-anchor="start" >14.3</text><text x="713.3" y="247.2" font-family='"Liberation Sans", sans-serif' font-size="15" fill="#e6e6e6" letter-spacing="0.3" text-anchor="start" >14.25</text><text x="713.3" y="300.5" font-family='"Liberation Sans", sans-serif' font-size="15" fill="#e6e6e6" letter-spacing="0.3" text-anchor="start" >14.15</text><text x="713.3" y="353.9" font-family='"Liberation Sans", sans-serif' font-size="15" fill="#e6e6e6" letter-spacing="0.3" text-anchor="start" >14.05</text><text x="713.3" y="407.2" font-family='"Liberation Sans", sans-serif' font-size="15" fill="#e6e6e6" letter-spacing="0.3" text-anchor="start" >13.95</text><text x="713.3" y="460.6" font-family='"Liberation Sans", sans-serif' font-size="15" fill="#e6e6e6" letter-spacing="0.3" text-anchor="start" >13.85</text><text x="713.3" y="513.9" font-family='"Liberation Sans", sans-serif' font-size="15" fill="#e6e6e6" letter-spacing="0.3" text-anchor="start" >13.75</text><text x="713.3" y="567.3" font-family='"Liberation Sans", sans-serif' font-size="15" fill="#e6e6e6" letter-spacing="0.3" text-anchor="start" >13.65</text><text x="713.3" y="620.6" font-family='"Liberation Sans", sans-serif' font-size="15" fill="#e6e6e6" letter-spacing="0.3" text-anchor="start" >13.55</text><text x="713.3" y="674.0" font-family='"Liberation Sans", sans-serif' font-size="15" fill="#e6e6e6" letter-spacing="0.3" text-anchor="start" >13.45</text><path d="M775.2 676.5H971.3 M775.5 676V683.5 M785.5 676V683.5 M795.5 676V683.5 M805.5 676V683.5 M814.5 676V683.5 M824.5 676V683.5 M834.5 676V683.5 M844.5 676V683.5 M854.5 676V683.5 M863.5 676V683.5 M873.5 676V683.5 M883.5 676V683.5 M893.5 676V683.5 M903.5 676V683.5 M912.5 676V683.5 M922.5 676V683.5 M932.5 676V683.5 M942.5 676V683.5 M952.5 676V683.5 M961.5 676V683.5 M971.5 676V683.5" stroke="#cfcfcf" stroke-width="1.2" fill="none"/><text x="775.2" y="711.5" font-family='"Liberation Sans", sans-serif' font-size="15" fill="#e6e6e6" letter-spacing="0.1" text-anchor="middle" >0.0</text><text x="853.6" y="711.5" font-family='"Liberation Sans", sans-serif' font-size="15" fill="#e6e6e6" letter-spacing="0.1" text-anchor="middle" >40.0</text><text x="971.3" y="711.5" font-family='"Liberation Sans", sans-serif' font-size="15" fill="#e6e6e6" letter-spacing="0.1" text-anchor="middle" >100</text><text x="873.0" y="730.3" font-family='"Liberation Serif", serif' font-size="15" fill="#e4e4e4" letter-spacing="0.75" text-anchor="middle" >freq (MHz)</text><text x="0.0" y="0.0" font-family='"Liberation Serif", serif' font-size="15" fill="#dcdcdc" letter-spacing="0.6" text-anchor="middle" transform="translate(706 442) rotate(-90)">V (dB)</text><path d="M776 239 L790 242.3 L814.3 255.8 L831 272.5 L843 293.6 L862.6 325.3 L879.2 360 L892.8 393.2 L911 440 L932 508.3 L949 568.7 L971 646" stroke="#e00000" stroke-width="1.2" fill="none" stroke-dasharray="3 1"/><path d="M779 242L862.6 330L880.7 330Z" stroke="#6a6a6a" stroke-width="1" fill="#000"/><rect x="780" y="330" width="193" height="21" rx="6" fill="#050505" stroke="#7a7a7a" stroke-width="1"/><text x="800.8" y="347.3" font-family='"Liberation Serif", serif' font-size="14.8" fill="#e4e4e4" letter-spacing="1.03" text-anchor="start" >M5: 100.0kHz 14.255dB</text><circle cx="776.2" cy="238.5" r="5.8" fill="none" stroke="#ff1010" stroke-width="1.3"/><path d="M773.2 235.5L779.2 241.5M779.2 235.5L773.2 241.5" stroke="#ff1010" stroke-width="1"/></svg>
</body></html>
